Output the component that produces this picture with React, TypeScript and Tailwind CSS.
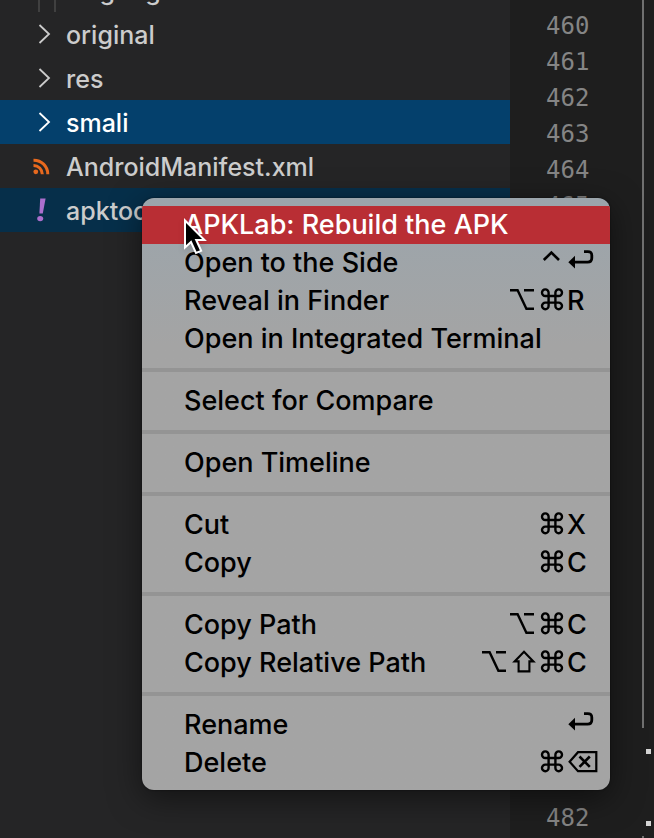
import type { ReactNode } from 'react';
import { clsx } from 'clsx';

type KeyName = 'control' | 'option' | 'shift' | 'command' | 'return' | 'delete';

interface MenuEntry {
  label: string;
  keys?: KeyName[];
  letter?: string;
  active?: boolean;
}

interface TreeEntry {
  name: string;
  icon: ReactNode;
  state?: 'selected' | 'target';
}

const MENU: MenuEntry[][] = [
  [
    { label: 'APKLab: Rebuild the APK', active: true },
    { label: 'Open to the Side', keys: ['control', 'return'] },
    { label: 'Reveal in Finder', keys: ['option', 'command'], letter: 'R' },
    { label: 'Open in Integrated Terminal' },
  ],
  [{ label: 'Select for Compare' }],
  [{ label: 'Open Timeline' }],
  [
    { label: 'Cut', keys: ['command'], letter: 'X' },
    { label: 'Copy', keys: ['command'], letter: 'C' },
  ],
  [
    { label: 'Copy Path', keys: ['option', 'command'], letter: 'C' },
    { label: 'Copy Relative Path', keys: ['option', 'shift', 'command'], letter: 'C' },
  ],
  [
    { label: 'Rename', keys: ['return'] },
    { label: 'Delete', keys: ['command', 'delete'] },
  ],
];

const LINES = Array.from({ length: 25 }, (_, i) => 459 + i);
const DOT_LINES = [480, 482];

function Chevron() {
  return (
    <svg width="20" height="20" viewBox="0 0 20 20" fill="none" stroke="currentColor" strokeWidth="1.8" aria-hidden="true">
      <path d="M8.5 1l9.5 9-9.5 9" />
    </svg>
  );
}

function Feed() {
  return (
    <svg width="17" height="17" viewBox="0 0 17 17" fill="none" stroke="#e8691e" strokeWidth="3" aria-hidden="true">
      <circle cx="2.8" cy="13.8" r="2.4" fill="#e8691e" stroke="none" />
      <path d="M.5 7.4A8.8 8.8 0 0 1 9.3 16.2" />
      <path d="M.5 2.2A14 14 0 0 1 14.8 16.2" />
    </svg>
  );
}

function Bang() {
  return (
    <svg width="10" height="24" viewBox="0 0 10 24" fill="#ab6fce" aria-hidden="true">
      <path d="M4.2 0.5H9.6L6.8 15.5H3.4Z" />
      <ellipse cx="4.2" cy="20.6" rx="3" ry="2.6" />
    </svg>
  );
}

const TREE: TreeEntry[] = [
  { name: 'original', icon: <Chevron /> },
  { name: 'res', icon: <Chevron /> },
  { name: 'smali', icon: <Chevron />, state: 'selected' },
  { name: 'AndroidManifest.xml', icon: <Feed /> },
  { name: 'apktool.yml', icon: <Bang />, state: 'target' },
];

function KeyIcon({ name }: { name: KeyName }) {
  switch (name) {
    case 'control':
      return (
        <svg width="28" height="24" viewBox="0 1 28 24" fill="none" stroke="currentColor" strokeWidth="2.6" role="img" aria-label="Control">
          <path d="M4.8 11l7.6-7.4L20 11" />
        </svg>
      );
    case 'option':
      return (
        <svg width="29" height="24" viewBox="0 1 29 24" fill="none" stroke="currentColor" strokeWidth="2.4" role="img" aria-label="Option">
          <path d="M0 3.2H7.6L16.4 21.8H24M14 3.2H24" />
        </svg>
      );
    case 'shift':
      return (
        <svg width="28" height="24" viewBox="0 1 28 24" fill="none" stroke="currentColor" strokeWidth="2.1" role="img" aria-label="Shift">
          <path d="M13 2.8L22.4 12.4H18.4V22.4H7.6V12.4H3.6Z" />
        </svg>
      );
    case 'command':
      return (
        <svg width="28" height="24" viewBox="0 1 28 24" fill="none" stroke="currentColor" strokeWidth="2.4" role="img" aria-label="Command">
          <path d="M9.6 9H6.4A3.3 3.3 0 1 1 9.6 5.7V18.9A3.3 3.3 0 1 1 6.4 15.6H19.6A3.3 3.3 0 1 1 16.4 18.9V5.7A3.3 3.3 0 1 1 19.6 9Z" />
        </svg>
      );
    case 'return':
      return (
        <svg width="32" height="24" viewBox="0 1 32 24" fill="none" stroke="currentColor" strokeWidth="2.8" role="img" aria-label="Return">
          <path d="M6 13.2H20.5Q24.8 13.2 24.8 9V6.6Q24.8 2.6 20.8 2.6H17" />
          <path d="M1.3 13.2L8 6.8V19.6Z" fill="currentColor" stroke="none" />
        </svg>
      );
    case 'delete':
      return (
        <svg width="32" height="24" viewBox="0 1 32 24" fill="none" stroke="currentColor" strokeWidth="2.2" role="img" aria-label="Delete">
          <path d="M11 3.2H29.3V22.2H11L2.6 12.7Z" />
          <path d="M12.5 7.5L22.8 17.9M22.8 7.5L12.5 17.9" strokeWidth="2.6" />
        </svg>
      );
  }
}

function MenuItem({ label, keys = [], letter, active }: MenuEntry) {
  return (
    <button
      type="button"
      role="menuitem"
      className={clsx(
        'flex h-[38px] w-full items-center justify-between pr-[11px] pb-0.5 pl-[42px] text-left whitespace-nowrap',
        active ? 'bg-[#b92e34] text-white' : 'text-black'
      )}
    >
      <span className="pt-0.5">{label}</span>
      <span className="flex items-center">
        {keys.map((key) => (
          <KeyIcon key={key} name={key} />
        ))}
        {letter ? <span className="w-8 pt-0.5">{letter}</span> : null}
      </span>
    </button>
  );
}

function ContextMenu() {
  return (
    <div
      role="menu"
      className="absolute top-[198px] left-[142px] w-[468px] overflow-hidden rounded-xl bg-[#a4a4a4] bg-linear-to-b from-[#9ba5ac] to-[#a4a4a4] to-25% py-2 text-[27px] leading-8 font-[450] shadow-[0_8px_32px_rgba(0,0,0,0.5),0_0_2px_rgba(0,0,0,0.6)]"
    >
      {MENU.map((group, i) => (
        <div key={group[0].label}>
          {i > 0 ? <div role="separator" className="my-[10px] h-1 bg-[#949494]" /> : null}
          {group.map((item) => (
            <MenuItem key={item.label} {...item} />
          ))}
        </div>
      ))}
    </div>
  );
}

function Explorer() {
  return (
    <nav aria-label="Files" className="min-w-0 flex-1 bg-[#252526] text-[25px] leading-8 font-[450] text-[#cccccc]">
      <ul className="-mt-8">
        <li className="flex h-11 items-center">
          <span className="ml-[38px] h-full w-[18px] border-x-2 border-[#404040]" />
          <a href="#google" className="pt-0.5 pl-9">.google</a>
        </li>
        {TREE.map(({ name, icon, state }) => (
          <li
            key={name}
            className={clsx(
              'flex h-11 items-center pl-6',
              state === 'selected' && 'bg-[#04406c] text-white',
              state === 'target' && 'bg-[#062f4a]'
            )}
          >
            <span className="flex w-[42px] justify-center pr-2">{icon}</span>
            <a href={`#${name}`} className="pt-0.5">{name}</a>
          </li>
        ))}
      </ul>
    </nav>
  );
}

function Gutter() {
  return (
    <main className="w-36 shrink-0 bg-[#1e1e1e]">
      <ol className="-mt-7 font-['DejaVu_Sans_Mono',monospace] text-2xl leading-9 text-[#858585]">
        {LINES.map((line) => (
          <li key={line} className="flex h-9 pl-9">
            <span className="w-24">{line}</span>
            {DOT_LINES.includes(line) ? (
              <span className="mt-[21px] ml-1 size-[5px] bg-[#d4d4d4]" />
            ) : (
              line !== 481 && <span className="w-0.5 bg-[#707070]" />
            )}
          </li>
        ))}
      </ol>
    </main>
  );
}

function Pointer() {
  return (
    <svg
      className="absolute top-[217px] left-[183px] drop-shadow-md"
      width="26"
      height="40"
      viewBox="0 0 26 40"
      aria-hidden="true"
    >
      <path
        d="M2 3.5V30.5L8 25L13 36L18.2 33.8L13.2 23H21.5Z"
        fill="#000"
        stroke="#fff"
        strokeWidth="2"
      />
    </svg>
  );
}

export default function App() {
  return (
    <div className="relative flex h-screen overflow-hidden font-['Inter',sans-serif]">
      <Explorer />
      <Gutter />
      <ContextMenu />
      <Pointer />
    </div>
  );
}
